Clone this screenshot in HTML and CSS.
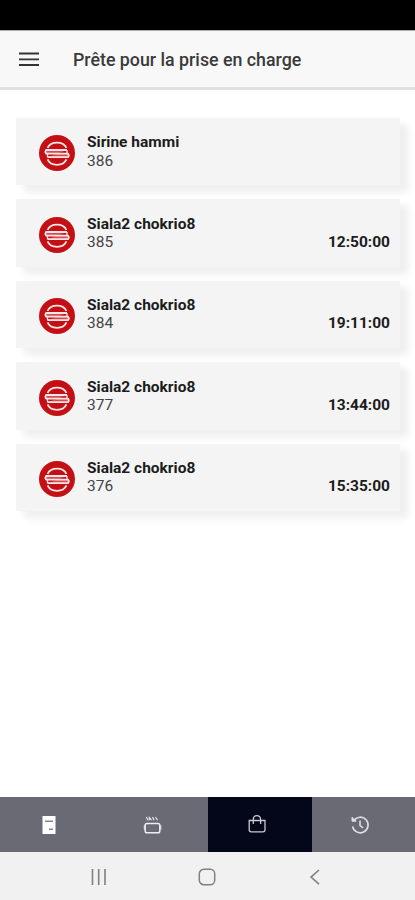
FILE: index.html
```html
<!DOCTYPE html>
<html lang="fr">
<head>
<meta charset="utf-8">
<title>Prête pour la prise en charge</title>
<link rel="stylesheet" href="styles.css">
</head>
<body>
<svg width="0" height="0" class="defs">
  <symbol id="burger" viewBox="0 0 36 36">
    <circle cx="18" cy="18" r="18" fill="#c41015"/>
    <g fill="none" stroke="#fae6e6" stroke-width="1.8" stroke-linejoin="round">
      <path d="M8.6 13C11.5 5.8 24.5 5.8 27.4 13"/>
      <path d="M28 15H7Q5.8 16.8 7 18.6H29Q30.6 20.3 29 22.2H8.5" fill="#d64c50"/>
      <path d="M28 15V18.6M8.5 18.6V22.2" stroke-width="1.3"/>
      <path d="M8.6 24.4C11.5 31.6 24.5 31.6 27.4 24.4"/>
    </g>
  </symbol>
</svg>
<div class="status"></div>
<header class="bar">
  <svg class="menu" viewBox="0 0 20 14"><path d="M0 1.5H20M0 7.3H20M0 13H20" stroke="#333" stroke-width="1.8"/></svg>
  <h1>Prête pour la prise en charge</h1>
</header>
<main class="list">
  <article class="card"><svg class="logo"><use href="#burger"/></svg><div class="info"><b>Sirine hammi</b><span>386</span></div></article>
  <article class="card"><svg class="logo"><use href="#burger"/></svg><div class="info"><b>Siala2 chokrio8</b><span>385</span></div><time>12:50:00</time></article>
  <article class="card"><svg class="logo"><use href="#burger"/></svg><div class="info"><b>Siala2 chokrio8</b><span>384</span></div><time>19:11:00</time></article>
  <article class="card"><svg class="logo"><use href="#burger"/></svg><div class="info"><b>Siala2 chokrio8</b><span>377</span></div><time>13:44:00</time></article>
  <article class="card"><svg class="logo"><use href="#burger"/></svg><div class="info"><b>Siala2 chokrio8</b><span>376</span></div><time>15:35:00</time></article>
</main>
<nav class="tabs">
  <a><svg viewBox="0 0 20 20"><path d="M3.5 1H16.5V19H3.5Z" fill="#fff"/><path d="M6 6.3H14M10 14.2H14" stroke="#85858d" stroke-width="1.5"/></svg></a>
  <a><svg viewBox="0 0 20 20" fill="none" stroke="#eeeef0" stroke-width="1.5"><rect x="2.2" y="8.5" width="14.6" height="9.3" rx="1.8"/><path d="M1.3 10.5V14.5M17.8 10.5V14.5" stroke-width="1"/><path d="M3.3 2L4.9 5.2M6.3 5.2V2.5L8.5 5.2M9.5 2L11.1 5.2M12.5 2L14.5 5.2" stroke-width="1.1"/></svg></a>
  <a class="active"><svg viewBox="0 0 20 20" fill="none" stroke="#c9c9d0" stroke-width="1.3"><path d="M2.2 5.5H18V14.7Q18 16.8 16 16.8H4.2Q2.2 16.8 2.2 14.7Z"/><path d="M6.3 9V4.3C6.3-.7 13.6-.7 13.6 4.3V9"/></svg></a>
  <a><svg viewBox="1 0 20 20" fill="none" stroke="#dddde1" stroke-width="1.6"><path d="M3.7 5.8A7.8 7.8 0 1 1 2.6 11.3"/><path d="M2 2.3V6.2H6.2L2 2.3" fill="#dddde1" stroke-width="1"/><path d="M10 5.5V10.4L13 13"/></svg></a>
</nav>
<footer class="system">
  <svg viewBox="0 0 16 16"><path d="M1.5 0V16M7.7 0V16M14 0V16" stroke="#808080" stroke-width="1.6"/></svg>
  <svg viewBox="0 0 16 16"><rect x=".3" y=".3" width="15.4" height="15.4" rx="4.5" fill="none" stroke="#808080" stroke-width="1.5"/></svg>
  <svg viewBox="0 0 16 16"><path d="M12 1L4 8.1L12 15.2" fill="none" stroke="#808080" stroke-width="1.6"/></svg>
</footer>
</body>
</html>
```
FILE: styles.css
```css
* { box-sizing: border-box; }
body {
  margin: 0;
  height: 900px;
  display: flex;
  flex-direction: column;
  overflow: hidden;
  background: #fff;
  color: #1c1c1c;
  font-family: Roboto, sans-serif;
}
svg { display: block; overflow: visible; }
.defs { position: absolute; }
.status { height: 30px; background: #000; }
.bar {
  height: 60px;
  display: flex;
  align-items: center;
  padding: 0 20px 1px 19px;
  gap: 34px;
  background: #f8f8f8;
  border-top: 1px solid #aaa;
  border-bottom: 3px solid #e0e0e0;
}
.menu { width: 20px; height: 14px; }
h1 { margin: 0; padding-top: 2px; font-size: 17.8px; font-weight: 500; color: #3a3a3a; white-space: nowrap; }
.list {
  flex: 1;
  display: flex;
  flex-direction: column;
  gap: 14px;
  padding: 28px 15px 0 16px;
}
.card {
  height: 67.4px;
  display: flex;
  padding: 0 10px 0 23px;
  background: #f4f4f4;
  box-shadow: 8px 6px 6px -1px #efefef, 8px 8px 10px #f4f4f4;
}
.logo { width: 36px; height: 36px; margin-top: 17.4px; }
.info { flex: 1; margin: 15.4px 0 0 12px; font-size: 15.5px; line-height: 18.2px; }
.info b, .info span { display: block; }
.info b { font-weight: 700; }
.info span { color: #444; }
time { margin-top: 33.6px; font-size: 15.5px; line-height: 18.2px; font-weight: 700; }
.tabs {
  height: 55px;
  display: grid;
  grid-template-columns: 104px 104px 104px 1fr;
  background: #6a6a75;
}
.tabs a { display: flex; align-items: center; justify-content: center; }
.tabs .active { background: #04061a; }
.tabs svg { width: 20px; height: 20px; margin-right: 6px; }
.system {
  height: 48px;
  display: flex;
  align-items: center;
  padding: 2px 0 0 91px;
  gap: 92px;
  background: #f1f1f1;
}
.system svg { width: 16px; height: 16px; }
```
